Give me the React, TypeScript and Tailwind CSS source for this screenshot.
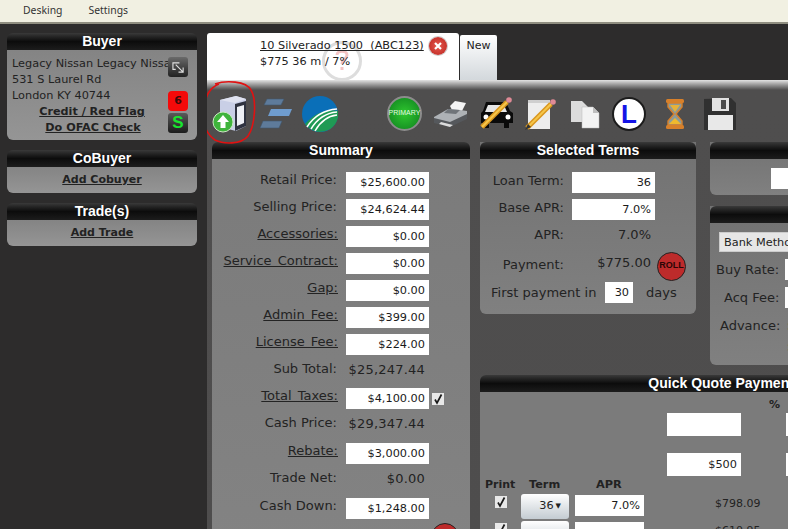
import type { ReactNode } from "react";

const verdana = "font-['DejaVu_Sans','Noto_Sans',sans-serif]";

function PanelHead({ title, className = "" }: { title: string; className?: string }) {
  return (
    <div className={`h-[17px] shrink-0 rounded-t-[6px] bg-gradient-to-b from-[#3a3a3a] via-[#0c0c0c] to-[#1c1c1c] text-center font-['Liberation_Sans',Arial,sans-serif] text-[14px] font-bold leading-[16px] text-white ${className}`}>
      {title}
    </div>
  );
}

function Field({ value = "", className = "w-[83px]" }: { value?: string; className?: string }) {
  return (
    <div className={`h-[21px] shrink-0 bg-white pr-[4px] text-right text-[11.3px] leading-[22px] text-[#1a1a1a] ${className}`}>
      {value}
    </div>
  );
}

function Check() {
  return (
    <div className="flex h-[12px] w-[12px] shrink-0 items-center justify-center bg-[#e8e8e8]">
      <svg viewBox="0 0 12 12" className="h-[12px] w-[12px]">
        <path d="M3 6.5 L5 10 L9.5 1.5" fill="none" stroke="#1a1a1a" strokeWidth="1.7" />
      </svg>
    </div>
  );
}

function SummaryRow({ label, link, value, input = true, className = "mb-[6px]", after }: { label: string; link?: boolean; value: string; input?: boolean; className?: string; after?: ReactNode }) {
  return (
    <div className={`flex h-[21px] items-center ${className}`}>
      <div className={`w-[126px] text-right text-[13px] leading-[16px] text-[#232323] ${link ? "pb-[5px] [word-spacing:2px]" : "pb-[6px] pr-[1px]"}`}>
        <span className={link ? "underline" : ""}>{label}</span>
      </div>
      <div className="ml-[8px] w-[83px] shrink-0">
        {input ? <Field value={value} /> : <div className="pb-[4px] pr-[4px] text-right text-[13px] leading-[20px] tracking-[0.2px] text-[#222]">{value}</div>}
      </div>
      {after}
    </div>
  );
}

function TermsRow({ label, children, className = "" }: { label: string; children: ReactNode; className?: string }) {
  return (
    <div className={`flex items-center ${className}`}>
      <div className="w-[84px] pb-[3px] text-right text-[13px] leading-[16px] text-[#232323]">{label}</div>
      <div className="ml-[8px]">{children}</div>
    </div>
  );
}

function SideBox({ title, children, className = "" }: { title: string; children: ReactNode; className?: string }) {
  return (
    <div className={`w-[190px] ${className}`}>
      <PanelHead title={title} />
      <div className="rounded-b-[6px] bg-gradient-to-b from-[#848484] to-[#959595]">{children}</div>
    </div>
  );
}

function UploadIcon() {
  return (
    <svg viewBox="0 0 36 38" className="h-[38px] w-[36px] shrink-0">
      <path d="M8 5 L24 1 L34 4 L34 31 L24 36 L8 32 Z" fill="#c9cfe6" />
      <path d="M23 9 L34 6 L34 31 L23 36 Z" fill="#2f3340" />
      <path d="M25 12 L32 10 L32 28 L25 31 Z" fill="#eef0f5" />
      <path d="M8 5 L24 1 L34 4 L23 8 Z" fill="#dfe2f0" />
      <circle cx="11" cy="27" r="10" fill="#3fb43c" stroke="#cde8c5" strokeWidth="1" />
      <path d="M11 20 L17 27 L13.5 27 L13.5 33 L8.5 33 L8.5 27 L5 27 Z" fill="#fff" />
    </svg>
  );
}

function StackIcon() {
  return (
    <svg viewBox="0 0 32 31" className="h-[31px] w-[32px] shrink-0">
      <path d="M7 1 L24 1 L21 7 L4 7 Z" fill="#5e7b9b" stroke="#40586f" strokeWidth="0.6" />
      <path d="M11 11 L32 11 L29 18 L8 18 Z" fill="#6f9cce" />
      <path d="M3 23 L22 23 L19 30 L0 30 Z" fill="#5e7b9b" stroke="#40586f" strokeWidth="0.6" />
    </svg>
  );
}

function RoadIcon() {
  return (
    <svg viewBox="0 0 36 36" className="h-[36px] w-[36px] shrink-0">
      <circle cx="18" cy="18" r="18" fill="#0a6fb8" />
      <path d="M3 28 C12 18 24 12 36 15 A18 18 0 0 1 5 30 Z" fill="#1f9a54" />
      <path d="M5 31 C12 20 22 14 35 13 M9 33 C15 23 24 17 35 16 M13 35 C18 26 26 20 35 19" fill="none" stroke="#fff" strokeWidth="1.5" />
    </svg>
  );
}

function PrimaryIcon() {
  return (
    <div className="flex h-[35px] w-[35px] shrink-0 items-center justify-center rounded-full border-[2px] border-[#8c8c8c] bg-[radial-gradient(circle,#2fc82f,#0f7f1f)] font-['Liberation_Sans',sans-serif] text-[7px] text-[#e4f8e4]">
      PRIMARY
    </div>
  );
}

function PrinterIcon() {
  return (
    <svg viewBox="0 0 35 28" className="h-[28px] w-[35px] shrink-0">
      <path d="M17 6 L22 1 L33 3 L29 11 L20 12 Z" fill="#f4f4f4" />
      <path d="M1 17 L15 9 L27 10 L34 11 L34 17 L17 24 L1 21 Z" fill="#aeb2b6" />
      <path d="M15 9 L27 10 L23 14 L11 13 Z" fill="#70757a" />
      <path d="M1 18 L17 22 L34 14 L34 19 L17 27 L1 23 Z" fill="#55585c" />
      <path d="M8 22 L20 25 L17 27 L6 24 Z" fill="#dcdcdc" />
    </svg>
  );
}

function Pencil({ d }: { d: string }) {
  return (
    <g>
      <path d={d} fill="none" stroke="#d9951d" strokeWidth="5" />
      <path d={d} fill="none" stroke="#f6c64a" strokeWidth="2" />
    </g>
  );
}

function CarIcon() {
  return (
    <svg viewBox="0 0 34 33" className="h-[33px] w-[34px] shrink-0">
      <path d="M6 5 L26 5 L30 14 L33 16 L33 26 L29 26 L29 31 L24 31 L24 26 L9 26 L9 31 L4 31 L4 26 L1 26 L1 16 L3 14 Z" fill="#0a0a0a" />
      <path d="M8 8 L24 8 L27 15 L5 15 Z" fill="#e6e6e6" />
      <circle cx="6" cy="20" r="2.5" fill="#fff" />
      <circle cx="28" cy="20" r="2.5" fill="#fff" />
      <Pencil d="M2 30 L27 5" />
      <circle cx="29" cy="3" r="2.8" fill="#e08a96" />
    </svg>
  );
}

function NoteIcon() {
  return (
    <svg viewBox="0 0 32 32" className="h-[32px] w-[32px] shrink-0">
      <path d="M3 2 L25 2 L25 31 L3 31 Z" fill="#ededed" />
      <path d="M3 2 L25 2 L25 5 L3 5 Z" fill="#cfcfcf" />
      <Pencil d="M2 30 L26 6" />
      <circle cx="28" cy="4" r="2.8" fill="#e08a96" />
      <path d="M0 32 L3 26 L6 29 Z" fill="#333" />
    </svg>
  );
}

function CopiesIcon() {
  return (
    <svg viewBox="0 0 30 30" className="h-[30px] w-[30px] shrink-0">
      <path d="M1 2 L12 2 L18 8 L18 23 L1 23 Z" fill="#dcdcdc" />
      <path d="M12 8 L23 8 L29 14 L29 29 L12 29 Z" fill="#f3f3f3" stroke="#bbb" strokeWidth="0.5" />
      <path d="M23 8 L23 14 L29 14 Z" fill="#bfbfbf" />
    </svg>
  );
}

function LoanIcon() {
  return (
    <div className="flex h-[34px] w-[34px] shrink-0 items-center justify-center rounded-full border-[2px] border-[#1c1c1c] bg-white font-['Liberation_Sans',sans-serif] text-[26px] font-bold leading-none text-[#1414e6]">
      L
    </div>
  );
}

function HourglassIcon() {
  return (
    <svg viewBox="0 0 22 32" className="h-[32px] w-[22px] shrink-0">
      <rect x="2" y="1" width="18" height="4" rx="1.5" fill="#d8802a" />
      <rect x="2" y="27" width="18" height="4" rx="1.5" fill="#d8802a" />
      <path d="M4 5 L18 5 L18 9 L12 16 L18 23 L18 27 L4 27 L4 23 L10 16 L4 9 Z" fill="#8d9a98" stroke="#d8802a" strokeWidth="1.4" />
      <path d="M6 7 L16 7 L11 14 Z" fill="#e6b23a" />
      <path d="M5 26 L17 26 L11 20 Z" fill="#f0b92e" />
    </svg>
  );
}

function SaveIcon() {
  return (
    <svg viewBox="0 0 34 34" className="h-[34px] w-[34px] shrink-0">
      <path d="M1 2 L28 1 L33 6 L33 33 L1 33 Z" fill="#303030" />
      <rect x="9" y="1" width="17" height="13" fill="#e2e2e2" />
      <rect x="18" y="3" width="5" height="9" fill="#4a4a4a" />
      <rect x="5" y="18" width="25" height="15" fill="#e8e8e8" />
    </svg>
  );
}

function TermDropdown({ value }: { value?: string }) {
  return (
    <div className="flex h-[25px] w-[48px] shrink-0 items-center justify-end rounded-[3px] bg-gradient-to-b from-white to-[#c4ccd2] pr-[8px] text-[11.3px] text-[#222]">
      {value}
      {value && <span className="ml-[2px] text-[7px]">▼</span>}
    </div>
  );
}

export default function App() {
  return (
    <div className={`h-[529px] w-[788px] overflow-hidden bg-[#2d2c2c] ${verdana}`}>
      <div className="flex h-[24px] items-center border-b-[2px] border-[#8f8e80] bg-[#f1f0e2] pl-[23px] font-['Noto_Sans',sans-serif] text-[10.4px] text-[#333]">
        <span>Desking</span>
        <span className="ml-[26px]">Settings</span>
      </div>

      <div className="flex">
        <div className="ml-[7px] mt-[9px] w-[190px] shrink-0">
          <SideBox title="Buyer">
            <div className="relative h-[90px] pl-[5px] pt-[6px] text-[11.3px] leading-[16px] text-[#222]">
              <div className="w-[162px] overflow-hidden whitespace-nowrap">Legacy Nissan Legacy Nissan</div>
              <div>531 S Laurel Rd</div>
              <div>London KY 40744</div>
              <div className="w-[160px] text-center text-[11.2px] font-bold underline">Credit / Red Flag</div>
              <div className="w-[162px] text-center text-[11.2px] font-bold underline">Do OFAC Check</div>
              <div className="absolute left-[161px] top-[7px] flex h-[20px] w-[20px] items-center justify-center rounded-[3px] bg-gradient-to-b from-[#6a6a6a] to-[#222]">
                <svg viewBox="0 0 14 14" className="h-[13px] w-[13px]" fill="none" stroke="#e0e0e0" strokeWidth="1.2">
                  <path d="M8 2 L1 2 L1 9 L4 9" />
                  <path d="M4 4 L12 12 M12 7 L12 12 L7 12" />
                </svg>
              </div>
              <div className="absolute left-[161px] top-[41px] flex h-[20px] w-[20px] items-center justify-center rounded-[4px] bg-[#f40a0a] text-[11px] font-bold text-[#3a0a0a]">6</div>
              <div className="absolute left-[161px] top-[63px] flex h-[20px] w-[20px] items-center justify-center rounded-[3px] bg-gradient-to-b from-[#5a5a5a] to-[#1c1c1c] font-['Liberation_Sans',sans-serif] text-[17px] font-bold text-[#19e52e]">S</div>
            </div>
          </SideBox>
          <SideBox title="CoBuyer" className="mt-[10px]">
            <div className="h-[26px] pt-[5px] text-center text-[11px] font-bold leading-[16px] text-[#222] underline">Add Cobuyer</div>
          </SideBox>
          <SideBox title="Trade(s)" className="mt-[10px]">
            <div className="h-[26px] pt-[5px] text-center text-[11px] font-bold leading-[16px] text-[#222] underline">Add Trade</div>
          </SideBox>
        </div>

        <div className="ml-[10px] w-[581px] shrink-0">
          <div className="mt-[9px] flex h-[47px] items-start">
            <div className="relative h-[47px] w-[252px] overflow-hidden rounded-t-[3px] bg-white pl-[53px] pt-[5px] text-[11.3px] leading-[16px] text-[#222]">
              {/* faded status stamp behind the tab text */}
              <svg viewBox="0 0 40 40" className="absolute left-[115px] top-[8px] h-[40px] w-[40px]" fill="none">
                <circle cx="20" cy="20" r="18.5" stroke="#dddddd" strokeWidth="3" />
                <path d="M15 14 C15 9 25 9 25 14 C25 18 20 18 20 23 M20 26 L20 29" stroke="#f3c4c4" strokeWidth="3" />
              </svg>
              <div className="relative underline">10 Silverado 1500&nbsp; (ABC123)</div>
              <div className="relative">$775 36 m / 7%</div>
              <div className="absolute left-[222px] top-[4px] flex h-[18px] w-[18px] items-center justify-center rounded-full bg-[radial-gradient(circle,#e85a50,#b8231d)] ring-1 ring-[#ccc]">
                <svg viewBox="0 0 10 10" className="h-[10px] w-[10px]">
                  <path d="M2 2 L8 8 M8 2 L2 8" stroke="#fff" strokeWidth="2.2" />
                </svg>
              </div>
            </div>
            <div className="ml-[1px] mt-[2px] h-[45px] w-[37px] rounded-t-[2px] bg-gradient-to-b from-white to-[#d3d8dc] pt-[3px] text-center text-[11px] text-[#222]">New</div>
          </div>

          <div className="h-[460px] overflow-hidden bg-gradient-to-b from-[#e4e4e4] via-[#4f4e4e] via-[10px] to-[#4e4d4d] pl-[5px]">
            <div className="flex h-[62px] items-center pt-[5px]">
              <div className="relative flex items-center">
                <UploadIcon />
                <svg viewBox="0 0 58 66" className="absolute left-[-11px] top-[-15px] h-[66px] w-[58px]" fill="none" stroke="#e01212" strokeWidth="1.6">
                  <path d="M14 4 C25 0 45 1 50 10 C56 20 54 46 47 56 C40 65 22 64 14 60 C5 54 0 42 3 26 C5 16 8 8 18 4" />
                </svg>
              </div>
              <div className="ml-[12px]"><StackIcon /></div>
              <div className="ml-[10px]"><RoadIcon /></div>
              <div className="ml-[49px]"><PrimaryIcon /></div>
              <div className="ml-[11px]"><PrinterIcon /></div>
              <div className="ml-[12px]"><CarIcon /></div>
              <div className="ml-[11px]"><NoteIcon /></div>
              <div className="ml-[13px]"><CopiesIcon /></div>
              <div className="ml-[12px]"><LoanIcon /></div>
              <div className="ml-[18px]"><HourglassIcon /></div>
              <div className="ml-[17px]"><SaveIcon /></div>
            </div>

            <div className="flex items-start">
              <div className="w-[258px] shrink-0">
                <PanelHead title="Summary" />
                <div className="h-[400px] bg-gradient-to-b from-[#7b7b7b] to-[#838383] pt-[13px]">
                  <SummaryRow label="Retail Price:" value="$25,600.00" />
                  <SummaryRow label="Selling Price:" value="$24,624.44" />
                  <SummaryRow label="Accessories:" link value="$0.00" />
                  <SummaryRow label="Service Contract:" link value="$0.00" />
                  <SummaryRow label="Gap:" link value="$0.00" />
                  <SummaryRow label="Admin Fee:" link value="$399.00" />
                  <SummaryRow label="License Fee:" link value="$224.00" />
                  <SummaryRow label="Sub Total:" value="$25,247.44" input={false} className="mb-[6px]" />
                  <SummaryRow label="Total Taxes:" link value="$4,100.00" after={<div className="ml-[3px]"><Check /></div>} />
                  <SummaryRow label="Cash Price:" value="$29,347.44" input={false} className="mb-[7px]" />
                  <SummaryRow label="Rebate:" link value="$3,000.00" />
                  <SummaryRow label="Trade Net:" value="$0.00" input={false} className="mb-[7px]" />
                  <SummaryRow label="Cash Down:" value="$1,248.00" className="mb-[4px]" />
                  <div className="ml-[219px] h-[28px] w-[28px] rounded-full border border-[#222] bg-[#bd2b2b]" />
                </div>
              </div>

              <div className="ml-[10px] w-[216px] shrink-0">
                <div className="rounded-b-[6px] bg-gradient-to-b from-[#727272] to-[#808080]">
                  <PanelHead title="Selected Terms" />
                  <div className="h-[155px] pt-[13px]">
                    <TermsRow label="Loan Term:" className="mb-[6px]"><Field value="36" /></TermsRow>
                    <TermsRow label="Base APR:" className="mb-[6px]"><Field value="7.0%" /></TermsRow>
                    <TermsRow label="APR:" className="h-[21px]">
                      <div className="w-[83px] pb-[4px] pr-[4px] text-right text-[13px] text-[#222]">7.0%</div>
                    </TermsRow>
                    <TermsRow label="Payment:" className="mt-[3px] h-[32px]">
                      <div className="flex items-center">
                        <div className="w-[83px] pb-[6px] pr-[4px] text-right text-[13px] text-[#222]">$775.00</div>
                        <div className="ml-[2px] flex h-[29px] w-[29px] items-center justify-center rounded-full border border-[#222] bg-[#bd2b2b] font-['Liberation_Sans',sans-serif] text-[9px] font-bold text-[#2a0505]">ROLL</div>
                      </div>
                    </TermsRow>
                    <div className="flex items-center pl-[11px] text-[13px] text-[#232323]">
                      <span className="w-[114px]">First payment in</span>
                      <Field value="30" className="w-[28px]" />
                      <span className="ml-[13px]">days</span>
                    </div>
                  </div>
                </div>

                <div className="mt-[61px] w-[500px]">
                  <PanelHead title="Quick Quote Payments" className="pr-[10px]" />
                  <div className="h-[140px] bg-[#7b7b7b] pt-[9px]">
                    <div className="flex">
                      <div className="w-[187px] shrink-0" />
                      <div className="w-[74px] shrink-0 pt-[12px]">
                        <div className="h-[23px] bg-white" />
                        <div className="mt-[17px] h-[23px] bg-white pr-[4px] text-right text-[11.3px] leading-[24px] text-[#222]">$500</div>
                      </div>
                      <div className="ml-[28px] shrink-0">
                        <div className="text-[11px] font-bold leading-[7px] text-[#222]">%</div>
                        <div className="ml-[17px] mt-[5px] h-[23px] w-[40px] bg-white" />
                        <div className="ml-[17px] mt-[17px] h-[23px] w-[40px] bg-white" />
                      </div>
                    </div>
                    <div className="mt-[2px] flex text-[11.3px] font-bold leading-[14px] text-[#222]">
                      <span className="ml-[5px] w-[44px] text-[11px]">Print</span>
                      <span className="w-[67px]">Term</span>
                      <span>APR</span>
                    </div>
                    <div className="mt-[2px] flex items-start">
                      <div className="ml-[15px] mt-[2px]"><Check /></div>
                      <div className="ml-[14px]"><TermDropdown value="36" /></div>
                      <div className="ml-[6px] mt-[1px]"><Field value="7.0%" className="w-[69px]" /></div>
                      <div className="ml-[71px] mt-[2px] text-[11px] text-[#222]">$798.09</div>
                    </div>
                    <div className="mt-[2px] flex items-start">
                      <div className="ml-[15px] mt-[2px]"><Check /></div>
                      <div className="ml-[14px]"><TermDropdown /></div>
                      <div className="ml-[6px] mt-[1px]"><Field className="w-[69px]" /></div>
                      <div className="ml-[71px] mt-[2px] text-[11px] text-[#222]">$610.95</div>
                    </div>
                  </div>
                </div>
              </div>

              <div className="ml-[14px] w-[120px] shrink-0">
                <div className="rounded-b-[6px] bg-gradient-to-b from-[#727272] to-[#808080]">
                  <PanelHead title="" />
                  <div className="h-[36px] pl-[61px] pt-[9px]">
                    <div className="h-[21px] bg-white" />
                  </div>
                </div>
                <div className="mt-[11px] rounded-b-[6px] bg-gradient-to-b from-[#727272] to-[#808080]">
                  <PanelHead title="" />
                  <div className="h-[142px] pt-[9px] text-[13px] text-[#232323]">
                    <div className="ml-[9px] h-[20px] overflow-hidden whitespace-nowrap border border-[#ccc] bg-[#e6e6e6] pl-[4px] text-[11.3px] leading-[19px] text-[#222]">Bank Method</div>
                    <div className="mt-[7px] flex h-[21px] items-center">
                      <span className="ml-[6px] w-[69px]">Buy Rate:</span>
                      <div className="h-[21px] w-[40px] bg-white" />
                    </div>
                    <div className="mt-[7px] flex h-[21px] items-center">
                      <span className="ml-[14px] w-[61px]">Acq Fee:</span>
                      <div className="h-[21px] w-[40px] bg-white" />
                    </div>
                    <div className="mt-[7px] flex h-[21px] items-center">
                      <span className="ml-[10px] w-[67px]">Advance:</span>
                      <span className="text-[#3d6b1f]">$</span>
                    </div>
                    <div className="ml-[77px] mt-[1px] text-[#3d6b1f]">$</div>
                  </div>
                </div>
              </div>
            </div>
          </div>
        </div>
      </div>
    </div>
  );
}
